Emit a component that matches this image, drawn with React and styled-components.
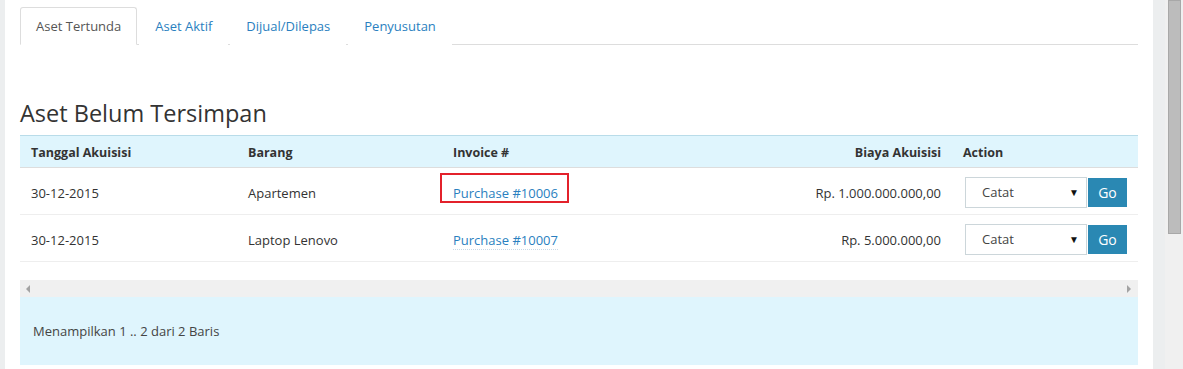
import React from "react";
import styled, { createGlobalStyle } from "styled-components";

const Global = createGlobalStyle`
  html, body { margin: 0; padding: 0; background: #eceeef; }
  body { font-family: "Open Sans", "Lato", sans-serif; font-size: 13px; color: #333; overflow: hidden; }
`;

const Screen = styled.div`
  display: flex;
  height: 369px;
  width: 1183px;
  overflow: hidden;
`;

const LeftEdge = styled.div`
  width: 5px;
  flex: none;
  background: #eceeef;
`;

const Panel = styled.main`
  flex: 1;
  background: #fff;
  padding: 7px 15px 0 15px;
  min-width: 0;
`;

const Gutter = styled.div`
  width: 12px;
  flex: none;
  background: #eceeef;
`;

const ScrollTrack = styled.div`
  width: 18px;
  flex: none;
  background: #f0f0f0;
  padding: 0 2px 0 3px;
  box-sizing: border-box;
`;

const ScrollThumb = styled.div`
  height: 234px;
  background: #bcbcbc;
  border: 1px solid #a8a8a8;
  box-sizing: border-box;
`;

const Tabs = styled.ul`
  display: flex;
  list-style: none;
  margin: 0;
  padding: 0;
  border-bottom: 1px solid #ddd;
`;

const Tab = styled.li`
  margin-right: 2px;
  margin-bottom: -1px;
  padding: 10px 15px 9px;
  line-height: 17px;
  border: 1px solid ${(p) => (p.$active ? "#ddd" : "transparent")};
  border-bottom-color: ${(p) => (p.$active ? "#fff" : "transparent")};
  border-radius: 3px 3px 0 0;
  background: #fff;
  color: ${(p) => (p.$active ? "#555" : "#2a7fc0")};
`;

const Heading = styled.h2`
  margin: 55px 0 9px;
  font-size: 23.5px;
  font-weight: 400;
  line-height: 26px;
  color: #333;
`;

const Table = styled.table`
  width: 100%;
  border-collapse: collapse;
  border-top: 1px solid #b9dce9;
  white-space: nowrap;
`;

const HeadCell = styled.th`
  background: #dff5fd;
  text-align: ${(p) => (p.$right ? "right" : "left")};
  font-weight: 700;
  font-size: 12.5px;
  color: #333;
  padding: 1px 11px 0;
  height: 30px;
  border-bottom: 1px solid #ddd;
  width: ${(p) => p.$w || "auto"};
`;

const Cell = styled.td`
  text-align: ${(p) => (p.$right ? "right" : "left")};
  padding: 3px 11px 0;
  height: 43px;
  border-bottom: 1px solid #eee;
  color: #333;
`;

const LinkText = styled.a`
  color: #2a7fc0;
  text-decoration: none;
  border-bottom: 1px dotted #c9d9e6;
  padding: 0;
  position: relative;
`;

const Highlight = styled.span`
  position: absolute;
  left: -13px;
  top: -11px;
  width: 129px;
  height: 30px;
  border: 2px solid #e3212b;
  box-sizing: border-box;
  pointer-events: none;
`;

const ActionWrap = styled.div`
  display: flex;
  align-items: center;
  gap: 1px;
  margin-left: 2px;
  margin-top: -1px;
`;

const SelectBox = styled.div`
  width: 122px;
  height: 31px;
  box-sizing: border-box;
  border: 1px solid #ccd6da;
  background: #fff;
  display: flex;
  align-items: center;
  justify-content: space-between;
  padding: 0 7px 0 16px;
  color: #444;
  font-size: 13px;
`;

const Caret = styled.span`
  font-size: 10px;
  color: #111;
`;

const GoButton = styled.button`
  width: 39px;
  height: 29px;
  border: none;
  background: #2a88b3;
  color: #fff;
  font-family: inherit;
  font-size: 14px;
  padding: 0;
`;

const HScroll = styled.div`
  margin-top: 18px;
  height: 17px;
  background: #f0f0f0;
  display: flex;
  align-items: center;
  justify-content: space-between;
  padding: 0 7px 0 6px;
`;

const Arrow = styled.span`
  width: 0;
  height: 0;
  border-top: 4px solid transparent;
  border-bottom: 4px solid transparent;
  ${(p) => (p.$dir === "left" ? "border-right: 4px solid #a3a3a3;" : "border-left: 4px solid #a3a3a3;")}
`;

const Footer = styled.div`
  background: #dff5fd;
  height: 68px;
  display: flex;
  align-items: center;
  padding-left: 13px;
  color: #444;
`;

const rows = [
  { date: "30-12-2015", item: "Apartemen", inv: "Purchase #10006", cost: "Rp. 1.000.000.000,00", mark: true },
  { date: "30-12-2015", item: "Laptop Lenovo", inv: "Purchase #10007", cost: "Rp. 5.000.000,00" },
];

export default function App() {
  return (
    <>
      <Global />
      <Screen>
        <LeftEdge />
        <Panel>
          <Tabs>
            <Tab $active>Aset Tertunda</Tab>
            <Tab>Aset Aktif</Tab>
            <Tab>Dijual/Dilepas</Tab>
            <Tab>Penyusutan</Tab>
          </Tabs>
          <Heading>Aset Belum Tersimpan</Heading>
          <Table>
            <thead>
              <tr>
                <HeadCell $w="195px">Tanggal Akuisisi</HeadCell>
                <HeadCell $w="183px">Barang</HeadCell>
                <HeadCell $w="120px">Invoice #</HeadCell>
                <HeadCell $right>Biaya Akuisisi</HeadCell>
                <HeadCell $w="164px">Action</HeadCell>
              </tr>
            </thead>
            <tbody>
              {rows.map((r) => (
                <tr key={r.inv}>
                  <Cell>{r.date}</Cell>
                  <Cell>{r.item}</Cell>
                  <Cell>
                    <LinkText href="#">
                      {r.inv}
                      {r.mark && <Highlight />}
                    </LinkText>
                  </Cell>
                  <Cell $right>{r.cost}</Cell>
                  <Cell>
                    <ActionWrap>
                      <SelectBox>
                        Catat <Caret>▼</Caret>
                      </SelectBox>
                      <GoButton>Go</GoButton>
                    </ActionWrap>
                  </Cell>
                </tr>
              ))}
            </tbody>
          </Table>
          <HScroll>
            <Arrow $dir="left" />
            <Arrow $dir="right" />
          </HScroll>
          <Footer>Menampilkan 1 .. 2 dari 2 Baris</Footer>
        </Panel>
        <Gutter />
        <ScrollTrack>
          <ScrollThumb />
        </ScrollTrack>
      </Screen>
    </>
  );
}
